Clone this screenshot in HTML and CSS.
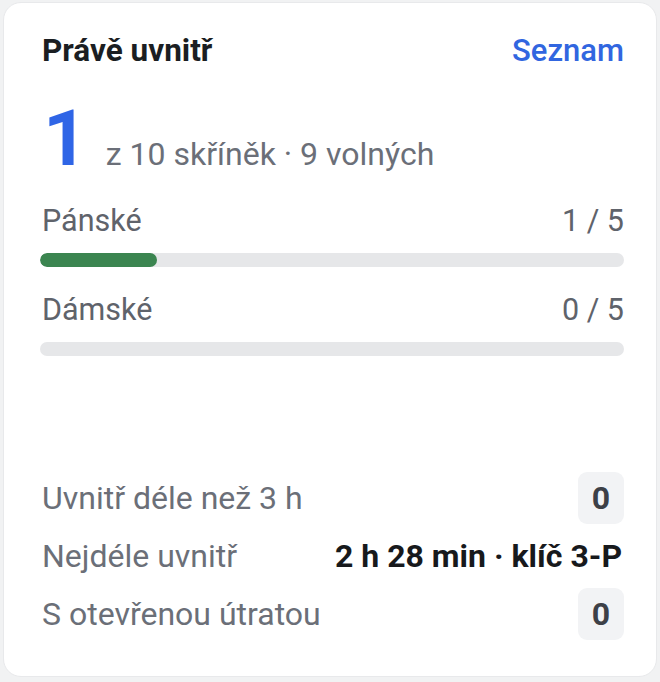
FILE: index.html
```html
<!DOCTYPE html>
<html lang="cs">
<head>
<meta charset="utf-8">
<title>Právě uvnitř</title>
<link rel="stylesheet" href="styles.css">
</head>
<body>
<div class="card">
  <div class="head">
    <h2 class="title">Právě uvnitř</h2>
    <a class="link" href="#">Seznam</a>
  </div>
  <div class="summary">
    <span class="big">1</span>
    <span class="sub">z 10 skříněk · 9 volných</span>
  </div>
  <div class="group">
    <div class="label-row"><span>Pánské</span><span>1 / 5</span></div>
    <div class="bar"><div class="fill" style="width:20%"></div></div>
  </div>
  <div class="group">
    <div class="label-row"><span>Dámské</span><span>0 / 5</span></div>
    <div class="bar"><div class="fill" style="width:0%"></div></div>
  </div>
  <div class="stats">
    <div class="stat"><span class="stat-label">Uvnitř déle než 3 h</span><span class="badge">0</span></div>
    <div class="stat"><span class="stat-label">Nejdéle uvnitř</span><span class="stat-value">2 h 28 min · klíč 3-P</span></div>
    <div class="stat"><span class="stat-label">S otevřenou útratou</span><span class="badge">0</span></div>
  </div>
</div>
</body>
</html>
```

FILE: styles.css
```css
* { box-sizing: border-box; }
html, body { margin: 0; padding: 0; }
body {
  background: #f1f2f3;
  font-family: Roboto, "Noto Sans", sans-serif;
  padding: 2px 3px 5px 3px;
}
.card {
  height: 675px;
  background: #ffffff;
  border: 1px solid #e8e9eb;
  border-radius: 18px;
  padding: 30px 32px 36px 36px;
  display: flex;
  flex-direction: column;
}
.head {
  display: flex;
  justify-content: space-between;
  align-items: center;
  height: 36px;
}
.title {
  margin: 0 0 0 2px;
  font-size: 31.5px;
  line-height: 36px;
  font-weight: 700;
  color: #1b1e22;
}
.link {
  font-size: 31px;
  line-height: 36px;
  font-weight: 500;
  color: #3166e0;
  text-decoration: none;
}
.summary {
  display: flex;
  align-items: baseline;
  gap: 18px;
  margin-top: 31px;
  padding-left: 3px;
}
.big {
  font-size: 78px;
  line-height: 78px;
  font-weight: 700;
  color: #2f65e6;
}
.sub {
  font-size: 32px;
  color: #6b6f78;
}
.group { margin-top: 25px; }
.label-row {
  display: flex;
  justify-content: space-between;
  padding-left: 2px;
  font-size: 30.5px;
  line-height: 36px;
  color: #5f636b;
}
.bar {
  margin-top: 14px;
  height: 14px;
  border-radius: 7px;
  background: #e6e7e9;
  overflow: hidden;
}
.fill {
  height: 100%;
  border-radius: 7px;
  background: #3b8550;
}
.stats {
  margin-top: auto;
  display: flex;
  flex-direction: column;
  gap: 6px;
  padding-left: 2px;
}
.stat {
  display: flex;
  justify-content: space-between;
  align-items: center;
  min-height: 52px;
  font-size: 32px;
}
.stat-label { color: #6b6f78; }
.stat-value { font-weight: 700; color: #17191c; margin-right: 2px; }
.badge {
  display: flex;
  align-items: center;
  justify-content: center;
  width: 46px;
  height: 52px;
  border-radius: 9px;
  background: #f2f3f5;
  font-weight: 700;
  color: #3d4047;
}
```
